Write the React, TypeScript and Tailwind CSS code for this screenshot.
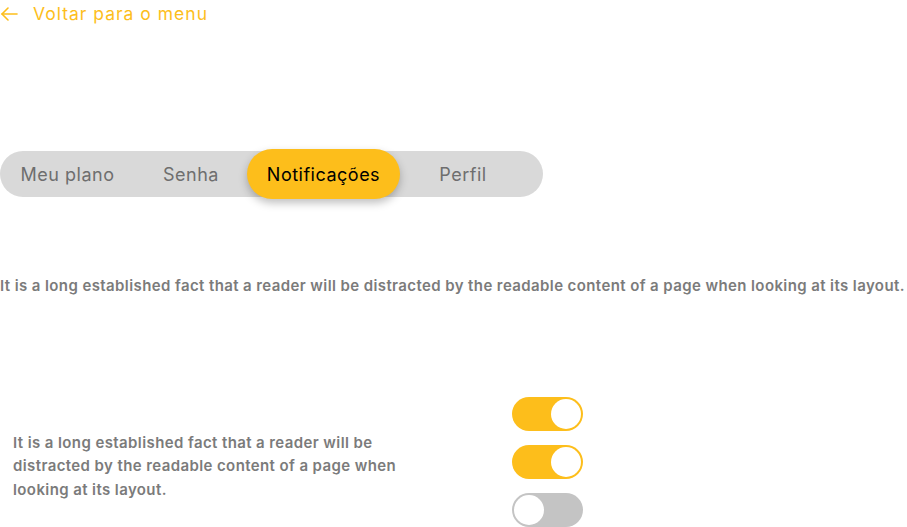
import React, { useState } from 'react';

const font = { fontFamily: 'Inter, "Open Sans", sans-serif' };

const Toggle: React.FC<{ on: boolean; onClick: () => void }> = ({ on, onClick }) => (
  <button
    onClick={onClick}
    className={`flex items-center w-[71px] h-[34px] rounded-full p-[2px] ${on ? 'bg-[#fdbe1b] justify-end' : 'bg-[#c4c4c4] justify-start'}`}
  >
    <span className="w-[30px] h-[30px] rounded-full bg-white" />
  </button>
);

const App: React.FC = () => {
  const [tab, setTab] = useState('Notificações');
  const [toggles, setToggles] = useState([true, true, false]);
  const tabs = [
    { label: 'Meu plano', w: 'w-[135px]' },
    { label: 'Senha', w: 'w-[112px]' },
    { label: 'Notificações', w: 'w-[153px]' },
    { label: 'Perfil', w: 'w-[126px]' },
  ];

  return (
    <div className="w-[907px] h-[527px] bg-white overflow-hidden" style={font}>
      {/* Back link */}
      <a href="#" className="flex items-center h-[28px] text-[#fdbe1b] text-[17.5px] tracking-[1px]">
        <svg width="17" height="14" viewBox="0 0 17 14" fill="none" stroke="currentColor" strokeWidth="1.6" strokeLinecap="round" strokeLinejoin="round" className="ml-[1px]">
          <path d="M16 7H1" />
          <path d="M7 1L1 7l6 6" />
        </svg>
        <span className="ml-[15px]">Voltar para o menu</span>
      </a>

      {/* Tabs */}
      <div className="mt-[123px] flex items-center w-[543px] h-[46px] bg-[#d9d9d9] rounded-full">
        {tabs.map(t => (
          <button
            key={t.label}
            onClick={() => setTab(t.label)}
            className={`${t.w} flex items-center justify-center text-[18px] tracking-[0.5px] rounded-full ${tab === t.label ? 'h-[50px] bg-[#fdbe1b] text-black shadow-[0_4px_8px_rgba(0,0,0,0.25)]' : 'h-[46px] text-[#6e6e6e]'}`}
          >
            {t.label}
          </button>
        ))}
      </div>

      <p className="mt-[78px] text-[15px] tracking-[0.4px] font-semibold text-[#7b7b7b] whitespace-nowrap">
        It is a long established fact that a reader will be distracted by the readable content of a page when looking at its layout.
      </p>

      <div className="mt-[99px] flex items-start">
        <p className="ml-[13px] mt-[34px] w-[400px] text-[15px] tracking-[0.4px] leading-[23.5px] font-semibold text-[#7b7b7b]">
          It is a long established fact that a reader will be distracted by the readable content of a page when looking at its layout.
        </p>
        <div className="ml-[99px] flex flex-col gap-[14px]">
          {toggles.map((on, i) => (
            <Toggle key={i} on={on} onClick={() => setToggles(toggles.map((v, j) => (j === i ? !v : v)))} />
          ))}
        </div>
      </div>
    </div>
  );
};

export default App;
